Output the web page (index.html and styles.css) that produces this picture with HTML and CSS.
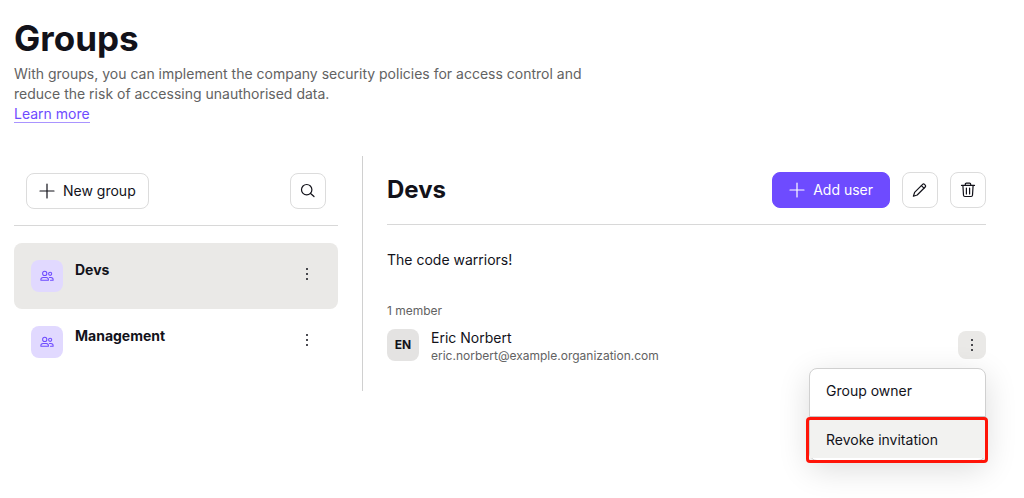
FILE: index.html
```html
<!DOCTYPE html>
<html lang="en">
<head>
  <meta charset="UTF-8">
  <meta name="viewport" content="width=device-width, initial-scale=1.0">
  <title>Groups</title>
  <link rel="stylesheet" href="styles.css">
</head>
<body>
  <!-- Shared icon shapes -->
  <svg class="sprite" aria-hidden="true">
    <symbol id="icon-plus" viewBox="0 0 16 16">
      <path d="M8 1v14M1 8h14"/>
    </symbol>
    <symbol id="icon-people" viewBox="0 0 16 16">
      <circle cx="5.4" cy="5" r="2.4"/>
      <circle cx="11.6" cy="5.5" r="1.8"/>
      <path d="M1 12.9v-.8c0-1.4 1.1-2.4 2.5-2.4h3.6c1.4 0 2.5 1 2.5 2.4v.8z"/>
      <path d="M10.8 9.7h1.7c1.4 0 2.5 1 2.5 2.4v.8h-3"/>
    </symbol>
    <symbol id="icon-dots" viewBox="0 0 16 16">
      <circle cx="8" cy="3" r="1"/>
      <circle cx="8" cy="8" r="1"/>
      <circle cx="8" cy="13" r="1"/>
    </symbol>
  </svg>

  <header class="page-header">
    <h1>Groups</h1>
    <p>With groups, you can implement the company security policies for access control and reduce the risk of accessing unauthorised data.</p>
    <a href="#" class="learn-more">Learn more</a>
  </header>

  <main class="layout">
    <section class="sidebar">
      <div class="toolbar sidebar-toolbar">
        <button type="button" class="btn">
          <svg class="icon"><use href="#icon-plus"/></svg>
          New group
        </button>
        <button type="button" class="btn btn-icon" aria-label="Search">
          <svg class="icon" viewBox="0 0 16 16">
            <circle cx="6.7" cy="6.7" r="5.2"/>
            <path d="M10.6 10.5l3.4 3"/>
          </svg>
        </button>
      </div>
      <ul class="group-list">
        <li class="group active">
          <span class="group-icon"><svg class="icon"><use href="#icon-people"/></svg></span>
          <span class="group-name">Devs</span>
          <button type="button" class="more" aria-label="Devs options">
            <svg class="icon dots"><use href="#icon-dots"/></svg>
          </button>
        </li>
        <li class="group">
          <span class="group-icon"><svg class="icon"><use href="#icon-people"/></svg></span>
          <span class="group-name">Management</span>
          <button type="button" class="more" aria-label="Management options">
            <svg class="icon dots"><use href="#icon-dots"/></svg>
          </button>
        </li>
      </ul>
    </section>

    <section class="details">
      <div class="toolbar">
        <h2>Devs</h2>
        <div class="actions">
          <button type="button" class="btn btn-primary">
            <svg class="icon"><use href="#icon-plus"/></svg>
            Add user
          </button>
          <button type="button" class="btn btn-icon" aria-label="Edit group">
            <svg class="icon" viewBox="0 0 16 16">
              <path d="M1.4 14.2l1.2-3.8 8-8c.6-.6 1.3-.6 1.9 0l.7.7c.6.6.6 1.3 0 1.9l-8 8z"/>
              <path d="M9.4 3.6l2.6 2.6"/>
            </svg>
          </button>
          <button type="button" class="btn btn-icon" aria-label="Delete group">
            <svg class="icon" viewBox="0 0 16 16">
              <path d="M1.5 3.4h13M5.3 3.4V2.2c0-.7.4-1.1 1.1-1.1h3.2c.7 0 1.1.4 1.1 1.1v1.2M2.9 3.4l.6 9.8c.1.8.5 1.3 1.3 1.3h6.4c.8 0 1.2-.5 1.3-1.3l.6-9.8M6.4 6v6M9.6 6v6"/>
            </svg>
          </button>
        </div>
      </div>
      <p class="description">The code warriors!</p>
      <p class="member-count">1 member</p>
      <div class="member">
        <span class="avatar">EN</span>
        <div class="member-info">
          <div class="member-name">Eric Norbert</div>
          <div class="member-email">eric.norbert@example.organization.com</div>
        </div>
        <button type="button" class="more open" aria-label="Member options">
          <svg class="icon dots"><use href="#icon-dots"/></svg>
        </button>
        <div class="menu">
          <button type="button" class="menu-item">Group owner</button>
          <button type="button" class="menu-item selected">Revoke invitation</button>
          <div class="callout"></div>
        </div>
      </div>
    </section>
  </main>
</body>
</html>
```

FILE: styles.css
```css
* {
  box-sizing: border-box;
}
body {
  min-height: 100vh;
  margin: 0;
  padding: 16px 38px 16px 14px;
  background: #fff;
  color: #12121a;
  font-family: Inter, "Liberation Sans", sans-serif;
  font-size: 14px;
  line-height: 20px;
}
h1, h2, p, ul {
  margin: 0;
  padding: 0;
}
button {
  font: inherit;
  color: inherit;
  cursor: pointer;
}
.sprite {
  position: absolute;
  width: 0;
  height: 0;
}
.icon {
  width: 16px;
  height: 16px;
  flex: none;
  fill: none;
  stroke: currentColor;
  stroke-width: 1.2;
  stroke-linecap: round;
  stroke-linejoin: round;
}
.dots {
  fill: currentColor;
  stroke: none;
}

/* Page header */
.page-header {
  max-width: 600px;
}
h1 {
  font-size: 35px;
  line-height: 44px;
  font-weight: 700;
}
.page-header p {
  margin-top: 4px;
  color: #626262;
}
.learn-more {
  color: #6e4bff;
  text-decoration: none;
  border-bottom: 1px solid #a994ff;
}

/* Two columns */
.layout {
  display: flex;
  margin-top: 32px;
}
.sidebar {
  width: 349px;
  flex: none;
  padding: 0 24px 16px 0;
  border-right: 1px solid #d0d0d0;
}
.details {
  flex: 1;
  padding-left: 24px;
}
.toolbar {
  display: flex;
  align-items: center;
  justify-content: space-between;
  padding: 16px 0;
  border-bottom: 1px solid #d8d8d8;
}
.sidebar-toolbar {
  padding: 17px 12px 16px;
}
.actions {
  display: flex;
  gap: 12px;
}
h2 {
  font-size: 24px;
  line-height: 32px;
  font-weight: 700;
}

/* Buttons */
.btn {
  display: flex;
  align-items: center;
  justify-content: center;
  gap: 8px;
  height: 36px;
  padding: 0 12px;
  background: #fff;
  border: 1px solid #dcdcdc;
  border-radius: 8px;
}
.btn-icon {
  width: 36px;
  padding: 0;
}
.btn-primary {
  padding: 0 16px;
  background: #6e4bff;
  border-color: #6e4bff;
  color: #fff;
}
.more {
  display: flex;
  align-items: center;
  justify-content: center;
  width: 28px;
  height: 28px;
  padding: 0;
  background: none;
  border: none;
  border-radius: 8px;
}
.more.open {
  background: #eae9e7;
}

/* Group list */
.group-list {
  margin-top: 17px;
  list-style: none;
}
.group {
  display: flex;
  gap: 12px;
  padding: 17px;
  border-radius: 8px;
}
.group.active {
  background: #eae9e7;
}
.group-icon {
  display: flex;
  align-items: center;
  justify-content: center;
  width: 32px;
  height: 32px;
  background: #e1d9ff;
  border-radius: 8px;
  color: #6e4bff;
}
.group-icon .icon {
  width: 14px;
  height: 14px;
}
.group-name {
  flex: 1;
  font-weight: 700;
}

/* Members */
.description {
  margin-top: 25px;
}
.member-count {
  margin-top: 31px;
  color: #626262;
  font-size: 12px;
}
.member {
  position: relative;
  display: flex;
  gap: 12px;
  margin-top: 8px;
}
.avatar {
  width: 32px;
  height: 32px;
  background: #e4e3e2;
  border-radius: 8px;
  font-size: 12px;
  line-height: 32px;
  font-weight: 700;
  text-align: center;
}
.member-info {
  flex: 1;
}
.member-name {
  line-height: 18px;
}
.member-email {
  color: #626262;
  font-size: 12px;
  line-height: 18px;
}
.member .more {
  margin-top: 2px;
}

/* Member menu */
.menu {
  position: absolute;
  top: 39px;
  right: 0;
  width: 177px;
  padding-bottom: 2px;
  background: #fff;
  border: 1px solid #d0d0d0;
  border-radius: 8px;
  box-shadow: 0 8px 32px rgba(0, 0, 0, 0.14);
}
.menu-item {
  display: block;
  width: 100%;
  padding: 12px 16px;
  background: none;
  border: none;
  text-align: left;
}
.menu-item.selected {
  margin-top: 3px;
  padding: 13px 16px 8px;
  border-top: 1px solid #c4c4c4;
  background: #f2f2f0;
}
.callout {
  position: absolute;
  right: -3px;
  bottom: -3px;
  left: -4px;
  height: 46px;
  border: 3px solid #ff1408;
  border-radius: 4px;
  pointer-events: none;
}
```
